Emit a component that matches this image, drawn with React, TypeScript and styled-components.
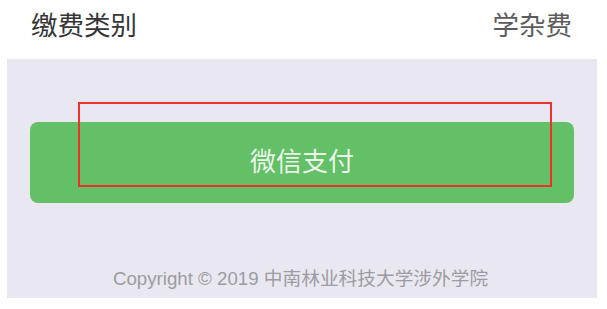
import React from 'react';
import styled, { createGlobalStyle } from 'styled-components';

const GlobalStyle = createGlobalStyle`
	html, body {
		margin: 0;
		padding: 0;
		background: #ffffff;
		font-family: 'Liberation Sans', 'Noto Sans CJK SC', sans-serif;
	}
`;

const Page = styled.div`
	width: 607px;
	height: 309px;
	display: flex;
	flex-direction: column;
	padding: 0 10px 11px 7px;
	box-sizing: border-box;
	overflow: hidden;
`;

const InfoRow = styled.div`
	height: 59px;
	display: flex;
	justify-content: space-between;
	align-items: center;
	padding: 0 25px 12px 24px;
	box-sizing: border-box;
`;

const Label = styled.span<{ $muted?: boolean }>`
	font-family: 'Noto Sans CJK SC', sans-serif;
	font-size: 26.5px;
	color: ${(props) => (props.$muted ? '#5c5c5c' : '#363636')};
`;

const Panel = styled.div`
	position: relative;
	flex: 1;
	background: #e9e8f0;
	display: flex;
	flex-direction: column;
	align-items: stretch;
	padding: 63px 23px 0;
	box-sizing: border-box;
`;

const PayButton = styled.button`
	height: 81px;
	border: none;
	border-radius: 8px;
	background: #63c066;
	color: rgba(255, 255, 255, 0.88);
	font-family: 'Noto Sans CJK SC', sans-serif;
	font-size: 26px;
	display: flex;
	align-items: center;
	justify-content: center;
	padding: 0 0 6px 0;
	cursor: pointer;
`;

const Copyright = styled.div`
	margin-top: 60px;
	text-align: center;
	font-size: 18.7px;
	color: #9c9ba3;
	padding-right: 3px;
`;

const Highlight = styled.div`
	position: absolute;
	left: 71px;
	top: 43px;
	width: 474px;
	height: 85px;
	border: 2px solid #f0302a;
	box-sizing: border-box;
	pointer-events: none;
`;

export default function App() {
	return (
		<>
			<GlobalStyle />
			<Page>
				<InfoRow>
					<Label>缴费类别</Label>
					<Label $muted>学杂费</Label>
				</InfoRow>
				<Panel>
					<PayButton>微信支付</PayButton>
					<Copyright>Copyright © 2019 中南林业科技大学涉外学院</Copyright>
					<Highlight />
				</Panel>
			</Page>
		</>
	);
}
